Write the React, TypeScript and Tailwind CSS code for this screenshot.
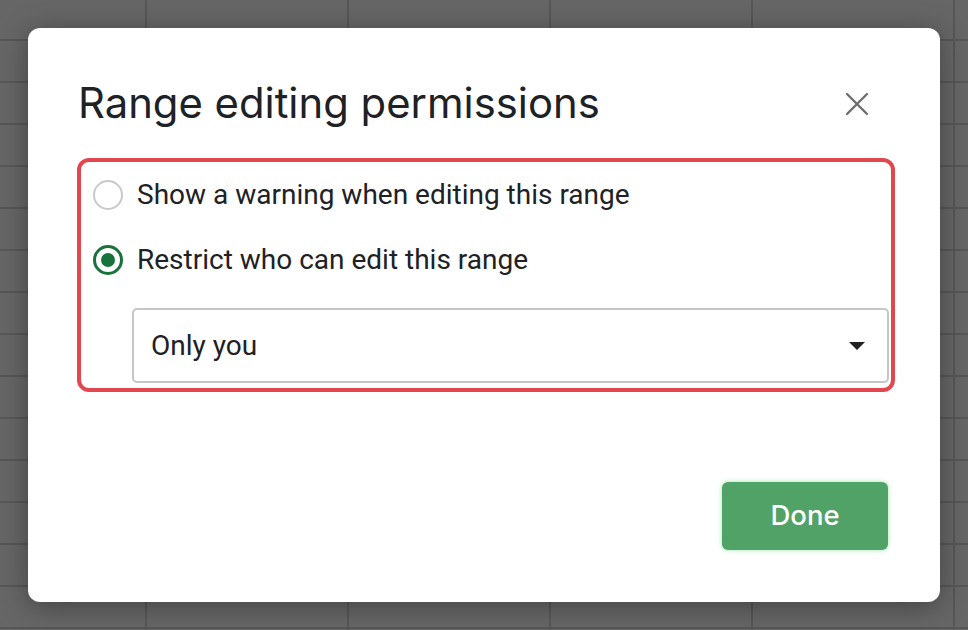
import React, { useState } from 'react';

const options = [
  { id: 'warn', label: 'Show a warning when editing this range' },
  { id: 'restrict', label: 'Restrict who can edit this range' },
];

function Radio({ checked }: { checked: boolean }) {
  return checked ? (
    <span className="flex h-[30px] w-[30px] shrink-0 items-center justify-center rounded-full border-[3px] border-[#18733a]">
      <span className="h-[14px] w-[14px] rounded-full bg-[#18733a]" />
    </span>
  ) : (
    <span className="h-[30px] w-[30px] shrink-0 rounded-full border-2 border-[#c9c9c9]" />
  );
}

export default function App() {
  const [mode, setMode] = useState('restrict');

  return (
    <div className="flex h-[630px] w-[968px] items-start bg-[#666666] bg-[linear-gradient(to_right,#575757_2px,transparent_2px),linear-gradient(to_bottom,#575757_2px,transparent_2px)] bg-[size:202px_42px] bg-[position:145px_39px] p-[28px]">
      <div className="flex h-[574px] w-[912px] flex-col rounded-[12px] bg-white pb-[52px] pl-[49px] pr-[45px] pt-[47px] shadow-[0_4px_28px_rgba(0,0,0,0.35)]">
        {/* header */}
        <div className="flex h-[58px] items-center justify-between">
          <h1 className="pl-[1px] font-['Inter',sans-serif] text-[41.8px] leading-none font-normal text-[#202124]">
            Range editing permissions
          </h1>
          <button className="mr-[26px] flex h-[24px] w-[24px] items-center justify-center text-[#6e6e6e]">
            <svg width="24" height="24" viewBox="0 0 24 24" fill="none" stroke="currentColor" strokeWidth="2.4" strokeLinecap="round">
              <path d="M2 2L22 22M22 2L2 22" />
            </svg>
          </button>
        </div>

        {/* permission choice */}
        <div className="mt-[25px] flex flex-col rounded-[12px] border-4 border-[#e2474f] pb-[5px] pl-[12px] pr-[2px] pt-[9px] font-['Roboto',sans-serif] text-[28px] text-[#202124]">
          {options.map((o, i) => (
            <label
              key={o.id}
              onClick={() => setMode(o.id)}
              className={`flex h-[48px] cursor-pointer items-center gap-[14px] ${i > 0 ? 'mt-[17px]' : ''}`}
            >
              <Radio checked={mode === o.id} />
              <span>{o.label}</span>
            </label>
          ))}
          <div className="ml-[39px] mt-[24px] flex h-[75px] items-center justify-between rounded-[5px] border-2 border-[#c6c6c6] pl-[17px] pr-[22px]">
            <span>Only you</span>
            <svg width="16" height="8" viewBox="0 0 16 8">
              <path d="M0 0H16L8 8Z" fill="#202124" />
            </svg>
          </div>
        </div>

        <div className="mt-auto flex justify-end pr-[7px]">
          <button className="h-[68px] w-[166px] rounded-[6px] bg-[#51a266] font-['Inter',sans-serif] text-[27.5px] font-medium text-white shadow-[0_0_5px_rgba(120,220,140,0.7)]">
            Done
          </button>
        </div>
      </div>
    </div>
  );
}
